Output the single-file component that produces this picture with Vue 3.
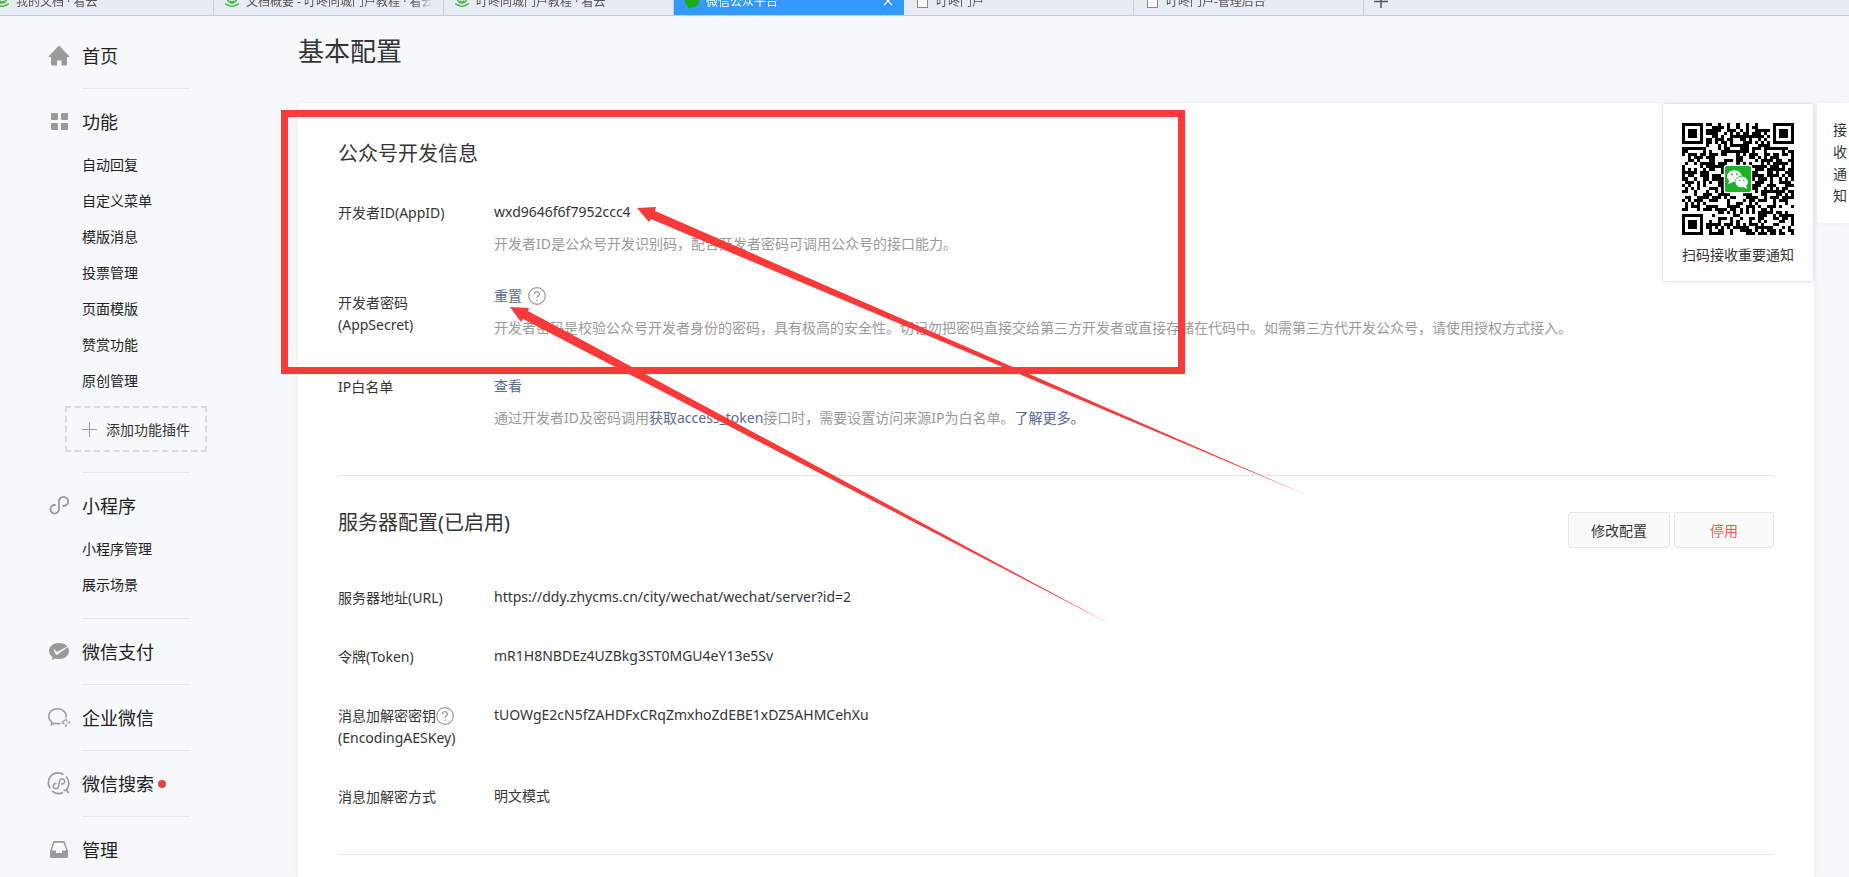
<template>
  <div class="page">
    <nav class="tabs">
      <button
        v-for="tab in tabs"
        :key="tab.title"
        class="tab"
        :class="{ active: tab.icon === 'wechat' }"
      >
        <svg v-if="tab.icon === 'book'" class="tab-icon" viewBox="0 0 16 16">
          <circle cx="8" cy="5.500" r="4.500" fill="none" stroke="#4fb848" stroke-width="1.600" />
          <path
            d="M5.500 8 L8 9.500 L10.500 8 M1 11 C3 11 5 13.300 8 13.300 C11 13.300 13 11 15 11"
            fill="none"
            stroke="#4fb848"
            stroke-width="1.600"
          />
        </svg>
        <svg v-else-if="tab.icon === 'wechat'" class="tab-icon" viewBox="0 0 16 16">
          <circle cx="8" cy="7" r="7.500" fill="#1aad19" />
          <path d="M4 12 V16 L9 14 Z" fill="#1aad19" />
        </svg>
        <svg v-else class="tab-icon" viewBox="0 0 16 16">
          <rect x="3.500" y="1.500" width="10" height="13" fill="#fafafa" stroke="#8a8a8a" />
        </svg>
        <span class="tab-title">{{ tab.title }}</span>
        <svg v-if="tab.icon === 'wechat'" class="tab-close" viewBox="0 0 10 10">
          <path d="M1 1 L9 9 M9 1 L1 9" stroke="#fff" stroke-width="1.200" />
        </svg>
      </button>
      <button class="tab-add" aria-label="新标签页">
        <svg viewBox="0 0 14 14">
          <path d="M7 0 V14 M0 7.500 H14" stroke="#555" stroke-width="1.500" />
        </svg>
      </button>
    </nav>

    <div class="content">
      <aside class="sidebar">
        <section v-for="group in menu" :key="group.title" class="group">
          <a href="#" class="group-title">
            <svg class="group-icon" viewBox="0 0 24 24">
              <template v-if="group.icon === 'home'">
                <path
                  d="M12 1.500 L22.500 12.500 Q22.500 13 22 13 H20 V20 Q20 21.500 18.500 21.500 H14.500 V16.500 H10 V21.500 H5.500 Q4 21.500 4 20 V13 H2 Q1.500 13 1.500 12.500 Z"
                  fill="#9a9a9a"
                />
              </template>
              <template v-else-if="group.icon === 'grid'">
                <rect x="4" y="3" width="7" height="7" rx="1" fill="#9a9a9a" />
                <rect x="14" y="3" width="7" height="7" rx="1" fill="#9a9a9a" />
                <rect x="4" y="13" width="7" height="7" rx="1" fill="#9a9a9a" />
                <rect x="14" y="13" width="7" height="7" rx="1" fill="#9a9a9a" />
              </template>
              <template v-else-if="group.icon === 'mini'">
                <path
                  d="M8 11 A4.300 4.300 0 1 0 12 15.300 V7.700 A4.600 4.600 0 1 1 16.500 12"
                  fill="none"
                  stroke="#9a9a9a"
                  stroke-width="1.800"
                  stroke-linecap="round"
                />
              </template>
              <template v-else-if="group.icon === 'pay'">
                <path
                  d="M12 3 C6.300 3 2 6.500 2 11 C2 13.500 3.300 15.600 5.500 17 L5 20 L8.500 18.500 C9.600 18.900 10.800 19 12 19 C17.700 19 22 15.500 22 11 C22 6.500 17.700 3 12 3 Z"
                  fill="#9a9a9a"
                />
                <path
                  d="M7 9.500 L10 12.300 L21 6.500 L10 14.500 Q9 14.700 8.600 13.700 Z"
                  fill="#f7f8fa"
                  stroke="#f7f8fa"
                  stroke-width="0.700"
                />
              </template>
              <template v-else-if="group.icon === 'work'">
                <path
                  d="M18.800 12 C20.500 6.500 15.500 2.800 10.500 2.800 C5.500 2.800 1.800 6 1.800 10.300 C1.800 12.800 3 14.800 4.800 16 L4.500 18.700 L7.500 17.300 C9.500 17.900 11.500 17.800 13.500 17.200"
                  fill="none"
                  stroke="#9a9a9a"
                  stroke-width="1.500"
                />
                <path
                  d="M18.500 12.800 L20 15 L22.500 16.300 L20 17.600 L18.500 20 L17 17.600 L14.500 16.300 L17 15 Z"
                  fill="none"
                  stroke="#9a9a9a"
                  stroke-width="1.400"
                  stroke-dasharray="3 1.500"
                />
              </template>
              <template v-else-if="group.icon === 'search'">
                <path
                  d="M16.500 2.500 A9.800 9.800 0 0 0 3.200 16.500 M5 18.800 A9.800 9.800 0 0 0 16 20.500 M19 4.500 A9.800 9.800 0 0 1 19.300 18 L21.800 21.300 M19.300 18 L16.500 18.500"
                  fill="none"
                  stroke="#9a9a9a"
                  stroke-width="1.600"
                />
                <path
                  d="M9 11.500 A2.600 2.600 0 1 0 11.500 14.500 L12.500 9.300 A2.600 2.600 0 1 1 14.500 12"
                  fill="none"
                  stroke="#9a9a9a"
                  stroke-width="1.500"
                  stroke-linecap="round"
                />
              </template>
              <template v-else>
                <path
                  d="M6.500 3 H17.500 L21 13 V18.500 Q21 20 19.500 20 H4.500 Q3 20 3 18.500 V13 Z M7.500 4.700 L4.700 12.500 H9 V15 H15 V12.500 H19.300 L16.500 4.700 Z"
                  fill="#9a9a9a"
                  fill-rule="evenodd"
                />
              </template>
            </svg>
            {{ group.title }}
            <i v-if="group.dot" class="dot"></i>
          </a>
          <ul v-if="group.items" class="group-items">
            <li v-for="item in group.items" :key="item">
              <a href="#">{{ item }}</a>
            </li>
          </ul>
          <button v-if="group.icon === 'grid'" class="add-plugin">
            <svg viewBox="0 0 15 15">
              <path d="M7.500 0 V15 M0 7.500 H15" stroke="#9a9a9a" />
            </svg>
            添加功能插件
          </button>
        </section>
      </aside>

      <main>
        <h1>基本配置</h1>
        <div class="card">
          <section>
            <header>
              <h2>公众号开发信息</h2>
            </header>
            <dl class="info">
              <div class="row">
                <dt>开发者ID(AppID)</dt>
                <dd>
                  <p>wxd9646f6f7952ccc4</p>
                  <p class="tip">开发者ID是公众号开发识别码，配合开发者密码可调用公众号的接口能力。</p>
                </dd>
              </div>
              <div class="row secret">
                <dt>开发者密码<br />(AppSecret)</dt>
                <dd>
                  <p class="with-help">
                    <a href="#">重置</a>
                    <svg class="help" viewBox="0 0 18 18">
                      <circle cx="9" cy="9" r="8.300" />
                      <path d="M6.500 7.200 C6.500 3.800 11.500 3.900 11.500 7 C11.500 8.800 9 8.800 9 11 M9 12.500 V14" />
                    </svg>
                  </p>
                  <p class="tip">
                    开发者密码是校验公众号开发者身份的密码，具有极高的安全性。切记勿把密码直接交给第三方开发者或直接存储在代码中。如需第三方代开发公众号，请使用授权方式接入。
                  </p>
                </dd>
              </div>
              <div class="row">
                <dt>IP白名单</dt>
                <dd>
                  <p><a href="#">查看</a></p>
                  <p class="tip">
                    通过开发者ID及密码调用<a href="#">获取access_token</a>接口时，需要设置访问来源IP为白名单。<a href="#">了解更多。</a>
                  </p>
                </dd>
              </div>
            </dl>
          </section>

          <section class="server">
            <header>
              <h2>服务器配置(已启用)</h2>
              <div class="actions">
                <button>修改配置</button>
                <button class="warn">停用</button>
              </div>
            </header>
            <dl class="info">
              <div class="row">
                <dt>服务器地址(URL)</dt>
                <dd>https://ddy.zhycms.cn/city/wechat/wechat/server?id=2</dd>
              </div>
              <div class="row">
                <dt>令牌(Token)</dt>
                <dd>mR1H8NBDEz4UZBkg3ST0MGU4eY13e5Sv</dd>
              </div>
              <div class="row">
                <dt>
                  <span class="key-name">
                    消息加解密密钥
                    <svg class="help" viewBox="0 0 18 18">
                      <circle cx="9" cy="9" r="8.300" />
                      <path d="M6.500 7.200 C6.500 3.800 11.500 3.900 11.500 7 C11.500 8.800 9 8.800 9 11 M9 12.500 V14" />
                    </svg>
                  </span>
                  (EncodingAESKey)
                </dt>
                <dd>tUOWgE2cN5fZAHDFxCRqZmxhoZdEBE1xDZ5AHMCehXu</dd>
              </div>
              <div class="row">
                <dt>消息加解密方式</dt>
                <dd>明文模式</dd>
              </div>
            </dl>
          </section>

          <div class="qr-card">
            <svg class="qr" viewBox="0 0 37 37">
              <path :d="qrPath" fill="#000" shape-rendering="crispEdges" />
              <rect x="13.800" y="13.800" width="9.400" height="9.400" rx="1" fill="#fff" />
              <rect x="14.200" y="14.200" width="8.600" height="8.600" rx="0.600" fill="#1db227" />
              <ellipse cx="17.300" cy="17.600" rx="2.400" ry="2" fill="#fff" />
              <path d="M15.600 18.800 L15.300 20.200 L17 19.400 Z" fill="#fff" />
              <circle cx="16.500" cy="17" r="0.300" fill="#1db227" />
              <circle cx="18.100" cy="17" r="0.300" fill="#1db227" />
              <ellipse cx="19.700" cy="19.500" rx="2.200" ry="1.900" fill="#fff" stroke="#1db227" stroke-width="0.250" />
              <path d="M20 21 L21.400 21.800 L21.200 20.500 Z" fill="#fff" />
              <circle cx="19" cy="19" r="0.250" fill="#1db227" />
              <circle cx="20.400" cy="19" r="0.250" fill="#1db227" />
            </svg>
            <p>扫码接收重要通知</p>
          </div>
          <div class="notice"><span>接收通知</span></div>
        </div>
      </main>
    </div>

    <div class="marker"></div>
    <svg class="arrows" width="1400" height="700" viewBox="0 0 1400 700">
      <path d="M637 208 L656 207 L655 211 L1309 496 L651 219 L649 222 Z" />
      <path d="M510 307 L529 308 L528 311 L1110 624 L523 319 L521 322 Z" />
    </svg>
  </div>
</template>

<script setup>
const tabs = [
  { title: '我的文档 · 看云', icon: 'book' },
  { title: '文档概要 - 叮咚同城门户教程 · 看云', icon: 'book' },
  { title: '叮咚同城门户教程 · 看云', icon: 'book' },
  { title: '微信公众平台', icon: 'wechat' },
  { title: '叮咚门户', icon: 'file' },
  { title: '叮咚门户-管理后台', icon: 'file' },
];

const menu = [
  { title: '首页', icon: 'home' },
  {
    title: '功能',
    icon: 'grid',
    items: ['自动回复', '自定义菜单', '模版消息', '投票管理', '页面模版', '赞赏功能', '原创管理'],
  },
  { title: '小程序', icon: 'mini', items: ['小程序管理', '展示场景'] },
  { title: '微信支付', icon: 'pay' },
  { title: '企业微信', icon: 'work' },
  { title: '微信搜索', icon: 'search', dot: true },
  { title: '管理', icon: 'tray' },
];

const SIZE = 37;

// returns null outside the three corner squares
function finder(x, y) {
  const corners = [
    [0, 0],
    [SIZE - 7, 0],
    [0, SIZE - 7],
  ];
  for (const [cx, cy] of corners) {
    const d = Math.max(Math.abs(x - cx - 3), Math.abs(y - cy - 3));
    if (d <= 4) return d === 3 || d <= 1;
  }
  return null;
}

function buildQr() {
  let seed = 4127;
  let d = '';
  for (let y = 0; y < SIZE; y++) {
    for (let x = 0; x < SIZE; x++) {
      seed = (seed * 16807) % 2147483647;
      const corner = finder(x, y);
      const dark = corner === null ? seed / 2147483647 < 0.52 : corner;
      if (dark) d += `M${x} ${y}h1v1h-1z`;
    }
  }
  return d;
}

const qrPath = buildQr();
</script>

<style>
body {
  margin: 0;
  background-color: #f7f8fa;
}
</style>

<style scoped>
.page {
  position: relative;
  display: flex;
  flex-direction: column;
  height: 100vh;
  overflow: hidden;
  font-family: 'Noto Sans', 'Noto Sans CJK SC', sans-serif;
  font-size: 14px;
  line-height: 22px;
  color: #353535;
}
a {
  color: #576b95;
  text-decoration: none;
}
button {
  font-family: inherit;
  cursor: pointer;
}
h1,
h2,
p,
ul,
dl,
dd {
  margin: 0;
  padding: 0;
  font-weight: normal;
}

/* browser tabs, cut off by the top of the window */
.tabs {
  display: flex;
  align-items: flex-end;
  flex-shrink: 0;
  box-sizing: border-box;
  height: 16px;
  padding-right: 16px;
  margin-left: -16px;
  overflow: hidden;
  background-color: #e7ebf4;
  border-bottom: 1px solid #c5cad5;
}
.tab {
  display: flex;
  align-items: center;
  gap: 6px;
  flex-shrink: 0;
  box-sizing: border-box;
  width: 230px;
  height: 28px;
  padding: 0 10px;
  border: none;
  border-right: 1px solid #c5cad5;
  background: none;
  font-size: 12px;
  color: #555;
}
.tab.active {
  background-color: #3399ff;
  border-color: #3399ff;
  color: white;
}
.tab-icon {
  width: 16px;
  height: 16px;
  flex-shrink: 0;
}
.tab-title {
  flex: 1;
  overflow: hidden;
  white-space: nowrap;
  text-align: left;
  mask-image: linear-gradient(to right, #000 90%, transparent);
}
.tab-close {
  width: 10px;
  height: 10px;
}
.tab-add {
  display: flex;
  align-items: center;
  height: 28px;
  padding: 0 10px;
  border: none;
  background: none;
}
.tab-add svg {
  width: 14px;
  height: 14px;
}

.content {
  display: flex;
  flex: 1;
  min-height: 0;
}

.sidebar {
  width: 298px;
  flex-shrink: 0;
  box-sizing: border-box;
  padding: 7px 91px 0 47px;
}
.group {
  display: flex;
  flex-direction: column;
  padding: 21px 0 20px;
}
.group + .group::before {
  content: '';
  height: 1px;
  margin: -21px 17px 21px 35px;
  background-color: #e4e6e9;
}
.group + .group {
  padding-top: 21px;
}
.group-title {
  display: flex;
  align-items: center;
  gap: 11px;
  font-size: 18px;
  line-height: 24px;
  color: #222;
}
.group-icon {
  width: 24px;
  height: 24px;
}
.dot {
  width: 8px;
  height: 8px;
  margin-left: -7px;
  border-radius: 50%;
  background-color: #e64340;
}
.group-items {
  display: flex;
  flex-direction: column;
  gap: 10px;
  margin: 18px 0 0 35px;
  list-style: none;
  line-height: 26px;
}
.group-items a {
  color: #222;
}
.add-plugin {
  display: flex;
  align-items: center;
  justify-content: center;
  gap: 9px;
  box-sizing: border-box;
  height: 46px;
  margin: 12px 0 0 18px;
  padding: 0;
  border: 2px dashed #d9dadc;
  background: none;
  font-size: 14px;
  color: #353535;
}
.add-plugin svg {
  width: 15px;
  height: 15px;
}

main {
  display: flex;
  flex-direction: column;
  flex: 1;
  min-width: 0;
  padding: 17px 35px 0 0;
}
h1 {
  margin-bottom: 34px;
  font-size: 26px;
  line-height: 36px;
}
.card {
  position: relative;
  flex: 1;
  min-height: 0;
  padding: 0 40px;
  background-color: white;
  border-radius: 3px;
  box-shadow: 0 1px 6px rgba(0, 0, 0, 0.05);
}
.card section {
  padding: 37px 0 46px;
  border-bottom: 1px solid #e4e6e8;
}
.card .server {
  padding-top: 33px;
}
header {
  display: flex;
  justify-content: space-between;
}
h2 {
  font-size: 20px;
  line-height: 28px;
}
.info {
  display: flex;
  flex-direction: column;
  gap: 30px;
  padding-top: 33px;
}
.server .info {
  gap: 36px;
  padding-top: 38px;
}
.row {
  display: flex;
}
dt {
  width: 156px;
  flex-shrink: 0;
  padding-top: 1px;
}
.secret {
  padding-bottom: 6px;
}
.secret dt {
  padding-top: 7px;
}
.tip {
  margin-top: 10px;
  color: #9a9a9a;
}
.with-help {
  display: flex;
  align-items: center;
  gap: 6px;
}
.key-name {
  display: flex;
  align-items: center;
}
.help {
  width: 18px;
  height: 18px;
  fill: none;
  stroke: #9a9a9a;
  stroke-width: 1.2px;
}
.actions {
  display: flex;
  gap: 4px;
  padding-top: 3px;
}
.actions button {
  min-width: 100px;
  height: 36px;
  padding: 0 22px;
  border: 1px solid #e4e6e8;
  border-radius: 3px;
  background-color: #fafafa;
  font-size: 14px;
  color: #353535;
}
.actions .warn {
  color: #ff5252;
}

.qr-card {
  position: absolute;
  top: 0;
  right: 0;
  padding: 19px 19px 14px;
  border: 1px solid #e4e8eb;
  border-radius: 3px;
  background-color: white;
  box-shadow: 0 1px 6px rgba(0, 0, 0, 0.05);
}
.qr {
  display: block;
  width: 112px;
  height: 112px;
  margin-bottom: 9px;
}
.qr-card p {
  padding-bottom: 1px;
}
.notice {
  position: absolute;
  top: 0;
  right: -35px;
  box-sizing: border-box;
  width: 32px;
  padding: 16px 0 16px 16px;
  border-radius: 3px 0 0 3px;
  background-color: white;
  box-shadow: 0 1px 6px rgba(0, 0, 0, 0.05);
}
.notice span {
  display: block;
  width: 14px;
}

.marker {
  position: absolute;
  top: 110px;
  left: 281px;
  box-sizing: border-box;
  width: 904px;
  height: 264px;
  border: 7px solid #fc3939;
  pointer-events: none;
}
.arrows {
  position: absolute;
  top: 0;
  left: 0;
  fill: #fc3939;
  pointer-events: none;
}
</style>
